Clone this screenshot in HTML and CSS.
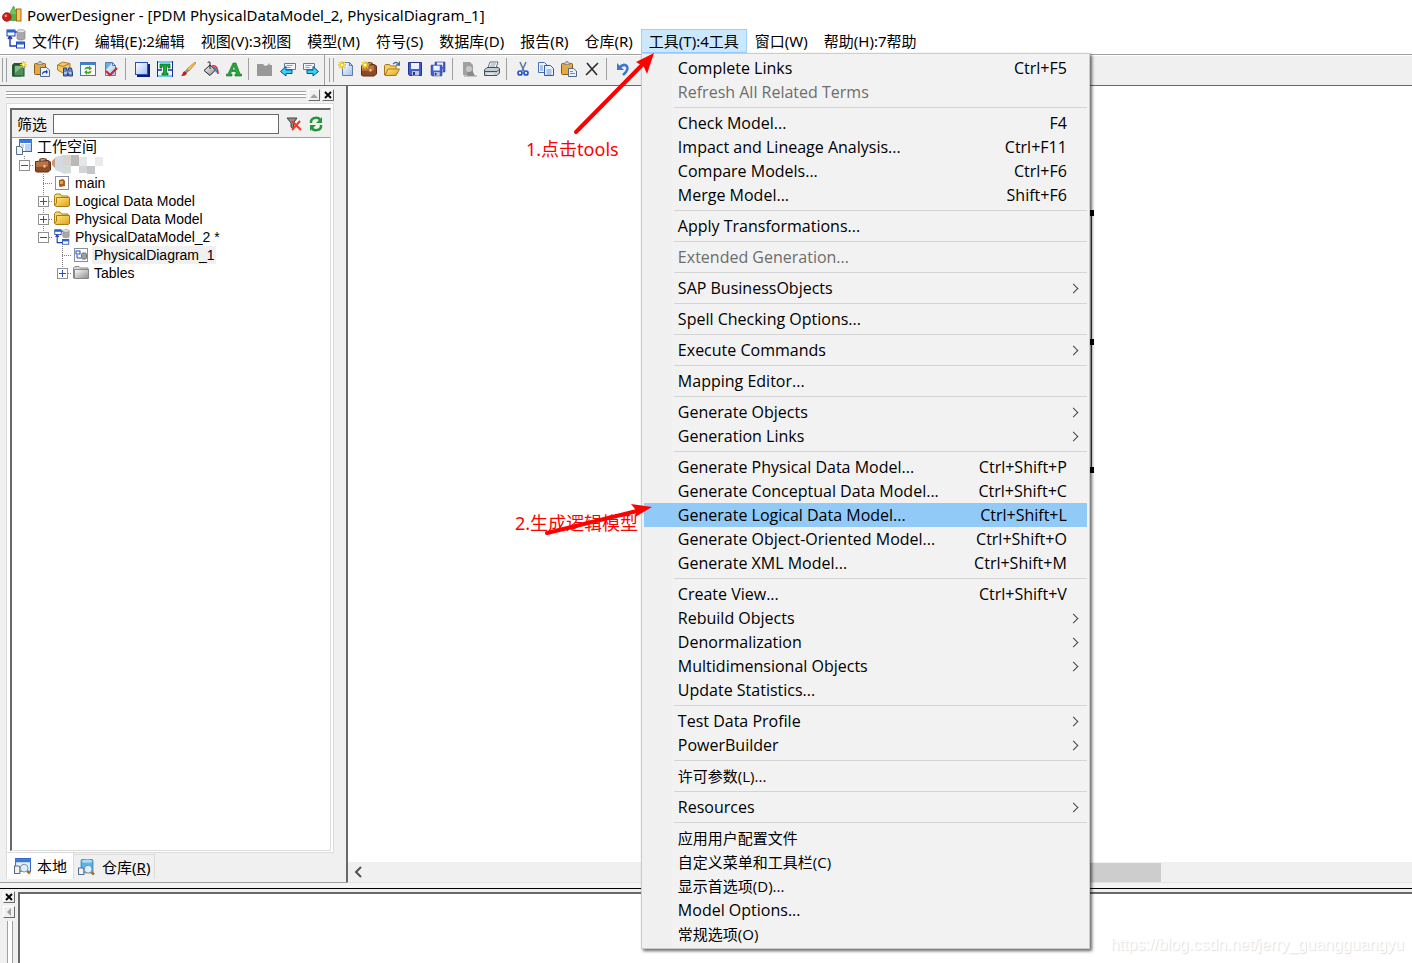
FILE: index.html
```html
<!DOCTYPE html>
<html lang="zh-CN">
<head>
<meta charset="utf-8">
<title>PowerDesigner</title>
<link rel="stylesheet" href="styles.css">
</head>
<body>
<svg class="defs" aria-hidden="true">
  <defs>
    <linearGradient id="gold" x1="0" y1="0" x2="1" y2="1"><stop offset="0" stop-color="#ffe98a"/><stop offset="1" stop-color="#e0a01c"/></linearGradient>
    <linearGradient id="silver" x1="0" y1="0" x2="1" y2="1"><stop offset="0" stop-color="#ffffff"/><stop offset="1" stop-color="#8a8a8a"/></linearGradient>
    <linearGradient id="sky" x1="0" y1="0" x2="1" y2="1"><stop offset="0" stop-color="#ffffff"/><stop offset="1" stop-color="#9fc0f0"/></linearGradient>
  </defs>
  <symbol id="spark" viewBox="0 0 8 8"><path d="M4 0v8M0 4h8M1 1l6 6M7 1l-6 6" stroke="#f0c818" stroke-width="1.3"/><circle cx="4" cy="4" r="1.3" fill="#fffbd0"/></symbol>
  <symbol id="model" viewBox="0 0 20 20"><path d="M4 7v10h7M4 7l-2 3M4 7l2 3M9 3h2" fill="none" stroke="#1c3cb4" stroke-width="1.4"/><rect x="1" y="1" width="8" height="6" fill="#fff" stroke="#1c3cb4"/><rect x="1" y="1" width="8" height="2.5" fill="#2a62d8"/><rect x="10.500" y="13" width="8" height="6" fill="#fff" stroke="#1c3cb4"/><rect x="10.500" y="13" width="8" height="2.500" fill="#2a62d8"/><path d="M11 2v7.500c0 2 8 2 8 0V2z" fill="#a8a8a8" stroke="#858585" stroke-width=".7"/><ellipse cx="15" cy="2.200" rx="4" ry="1.600" fill="#e4e4e4" stroke="#858585" stroke-width=".6"/></symbol>
  <symbol id="case" viewBox="0 0 16 16"><path d="M5 4V2.500c0-1 6-1 6 0V4" fill="none" stroke="#6e3218" stroke-width="1.500"/><path d="M0.500 4.500L13 3.500l2.500 1.500v8L13 15H1.500l-1-1z" fill="#8c4a26" stroke="#5f2c14"/><path d="M1 5l12-.8V9.500L1 10z" fill="#b97345"/><rect x="8.500" y="8" width="2" height="2.500" fill="#f6d87c"/></symbol>
  <symbol id="folder" viewBox="0 0 16 16"><path d="M.5 12.500V2.500L2 1h4l1.500 2H14v2" fill="#f7dc70" stroke="#a87c10"/><path d="M2.500 4.500h13v8l-1.500 1H2L.5 12.200 2.500 10z" fill="url(#gold)" stroke="#a87c10"/></symbol>
  <symbol id="gfolder" viewBox="0 0 16 16"><path d="M.5 13V3L2 1.500h4L7.500 3H15V13z" fill="#d8d8d8" stroke="#888"/><path d="M1.500 4.500h14v9h-14z" fill="url(#silver)" stroke="#888"/></symbol>
  <symbol id="lens" viewBox="0 0 12 12"><path d="M7.500 7.500l3.500 3" stroke="#b8681c" stroke-width="2.500"/><circle cx="5" cy="5" r="4" fill="#dcf0fc" stroke="#7c8ca0"/></symbol>
  <symbol id="page" viewBox="0 0 16 16"><path d="M3.500 1.500h7l3 3v10h-10z" fill="url(#sky)" stroke="#5a7ea8"/><path d="M10.500 1.500v3h3" fill="none" stroke="#5a7ea8"/></symbol>
  <symbol id="clip" viewBox="0 0 16 16"><rect x=".5" y="2.500" width="11" height="11" rx="1" fill="#e8aa38" stroke="#8a5a18"/><path d="M3 3.500V2h2V.500h2V2h2v1.500z" fill="#d4d4d4" stroke="#777" stroke-width=".7"/></symbol>
  <symbol id="floppy" viewBox="0 0 16 16"><path d="M1.500 1.500h13v13h-12l-1-1z" fill="#3e5ed0" stroke="#26348c"/><path d="M4 2h8v6H4z" fill="#eef2ff"/><path d="M5 10h7v4.500H5z" fill="#c0c8e0"/><path d="M6 11h2v3H6z" fill="#26348c"/></symbol>
  <symbol id="out" viewBox="0 0 16 16"><path d="M4.500 2.500h11v6h-11z" fill="#f2f5fa" stroke="#68789c"/><path d="M6.500 4.500h6M6.500 6.500h4" stroke="#8c9cbc"/></symbol>
</svg>

<header class="titlebar">
  <svg class="i20" viewBox="0 0 20 20"><path d="M6.500 11L11.500 1 16 11z" fill="#6cc85c" stroke="#3c9438" stroke-width=".8"/><path d="M8 9h6v7H8z" fill="#58b04c"/><circle cx="4.800" cy="12" r="4.300" fill="#cc1c1c" stroke="#941010" stroke-width=".8"/><circle cx="3.800" cy="10.800" r="1.400" fill="#f09080"/><rect x="14.500" y="4" width="4.500" height="12" fill="#f8c860" stroke="#a46a10"/></svg>
  <h1>PowerDesigner - [PDM PhysicalDataModel_2, PhysicalDiagram_1]</h1>
</header>

<nav class="menubar" aria-label="主菜单">
  <svg class="i20" viewBox="0 0 20 20"><use href="#model"/></svg>
  <button>文件(F)</button>
  <button>编辑(E):2编辑</button>
  <button>视图(V):3视图</button>
  <button>模型(M)</button>
  <button>符号(S)</button>
  <button>数据库(D)</button>
  <button>报告(R)</button>
  <button>仓库(R)</button>
  <div class="open">
    <button class="active" aria-expanded="true">工具(T):4工具</button>
    <div class="dropdown">
      <button>Complete Links<kbd>Ctrl+F5</kbd></button>
      <button disabled>Refresh All Related Terms</button>
      <hr>
      <button>Check Model...<kbd>F4</kbd></button>
      <button>Impact and Lineage Analysis...<kbd>Ctrl+F11</kbd></button>
      <button>Compare Models...<kbd>Ctrl+F6</kbd></button>
      <button>Merge Model...<kbd>Shift+F6</kbd></button>
      <hr>
      <button>Apply Transformations...</button>
      <hr>
      <button disabled>Extended Generation...</button>
      <hr>
      <button class="sub">SAP BusinessObjects</button>
      <hr>
      <button>Spell Checking Options...</button>
      <hr>
      <button class="sub">Execute Commands</button>
      <hr>
      <button>Mapping Editor...</button>
      <hr>
      <button class="sub">Generate Objects</button>
      <button class="sub">Generation Links</button>
      <hr>
      <button>Generate Physical Data Model...<kbd>Ctrl+Shift+P</kbd></button>
      <button>Generate Conceptual Data Model...<kbd>Ctrl+Shift+C</kbd></button>
      <button class="hot">Generate Logical Data Model...<kbd>Ctrl+Shift+L</kbd></button>
      <button>Generate Object-Oriented Model...<kbd>Ctrl+Shift+O</kbd></button>
      <button>Generate XML Model...<kbd>Ctrl+Shift+M</kbd></button>
      <hr>
      <button>Create View...<kbd>Ctrl+Shift+V</kbd></button>
      <button class="sub">Rebuild Objects</button>
      <button class="sub">Denormalization</button>
      <button class="sub">Multidimensional Objects</button>
      <button>Update Statistics...</button>
      <hr>
      <button class="sub">Test Data Profile</button>
      <button class="sub">PowerBuilder</button>
      <hr>
      <button class="zh">许可参数(L)...</button>
      <hr>
      <button class="sub">Resources</button>
      <hr>
      <button class="zh">应用用户配置文件</button>
      <button class="zh">自定义菜单和工具栏(C)</button>
      <button class="zh">显示首选项(D)...</button>
      <button>Model Options...</button>
      <button class="zh">常规选项(O)</button>
    </div>
  </div>
  <button>窗口(W)</button>
  <button>帮助(H):7帮助</button>
</nav>

<div class="toolbar">
  <div class="band">
    <button aria-label="新建模型"><svg viewBox="0 0 16 16"><path d="M1 4l2-2h9v12l-2 1.500H1z" fill="#245c34"/><rect x="3" y="4" width="10" height="11" fill="#4c9258" stroke="#1c4c2a"/><path d="M4 5h8L4 12z" fill="#86bc8c"/><use href="#spark" x="9" y="0" width="7" height="7"/></svg></button>
    <button aria-label="粘贴快捷方式"><svg viewBox="0 0 16 16"><use href="#clip" width="16" height="16"/><path d="M6.500 6.500h6l3 2.500v6.500h-9z" fill="#e8f0fc" stroke="#51688c"/><path d="M8 14c0-3 1-4 4-4V8.500l2 2.500-2 2v-1.500c-2 0-3 .5-4 2.500z" fill="#1c3ca4"/></svg></button>
    <button aria-label="查找"><svg viewBox="0 0 16 16"><path d="M.5 4l5-3L13 2.500V9l-7 3-5.500-3z" fill="#f2c868" stroke="#b07c20"/><path d="M.5 4L6 5.500l7-3" fill="none" stroke="#b07c20"/><path d="M6.500 7h3v2h2V7h3l1 5v3h-4v-3h-1v3h-4v-3z" fill="#6488c4" stroke="#284880"/><path d="M7 12h3M11.500 12h3" stroke="#fff"/></svg></button>
    <button aria-label="刷新"><svg viewBox="0 0 16 16"><rect x=".5" y="1.500" width="15" height="13" fill="#fff" stroke="#4876bc"/><path d="M1 2h14v2H1z" fill="#3e80d8"/><path d="M4.500 9c0-3 2-3.500 4.500-3V4.500L12 7.500l-3 2V8C7 7.500 6 8 4.500 9zM11.500 9.500c0 3-2 3.500-4.500 3V14l-3-3 3-2v1.500c2 .5 3 0 4.500-1z" fill="#4ca42c"/></svg></button>
    <button aria-label="检查模型"><svg viewBox="0 0 16 16"><use href="#page" x="-1" width="16" height="16"/><path d="M3 2h6L3 9z" fill="#64b0ec"/><path d="M3 10l4 4 7-7" fill="none" stroke="#cc2828" stroke-width="2.200"/></svg></button>
    <span class="sep"></span>
    <button aria-label="阴影"><svg viewBox="0 0 16 16"><path d="M3 3h13v13H3z" fill="#0c1c78"/><rect x="1.500" y="1.500" width="12" height="12" fill="url(#sky)" stroke="#2850c0"/></svg></button>
    <button aria-label="文本"><svg viewBox="0 0 16 16"><rect x=".5" y=".5" width="15" height="15" fill="#e8faff" stroke="#1c3090"/><path d="M1 1h14M1 15h14" stroke="#70c8f0" stroke-width="2"/><path d="M3 3h10v4h-2V5H9.500v7H11v2H5v-2h1.500V5H5v2H3z" fill="#10b030" stroke="#086818" stroke-width=".7"/><path d="M1 9h4M11 9h4" stroke="#1c3090" stroke-width="1.500"/></svg></button>
    <button aria-label="画笔"><svg viewBox="0 0 16 16"><path d="M15 1L7 8l2 2 7-8z" fill="#f8c050" stroke="#b07820" stroke-width=".7"/><path d="M1 15c2-1 1-4 4-5l2 2c-1 3-4 3-6 3z" fill="#cc1818"/><path d="M5 10l2-2 2 2-2 2z" fill="#888"/></svg></button>
    <button aria-label="填充"><svg viewBox="0 0 16 16"><path d="M7 4L1 9.500l6 5 5.500-5.500z" fill="url(#silver)" stroke="#222"/><path d="M7 8V2c0-2-2-1.500-2 0" fill="none" stroke="#222"/><path d="M9 5c4-1 6 2 6 8" fill="none" stroke="#e82020" stroke-width="1.500"/><path d="M10 6.500c3 0 3 2 3.500 5" fill="none" stroke="#3080e0" stroke-width="1.500"/></svg></button>
    <button aria-label="字体"><svg viewBox="0 0 16 16"><path d="M7 2h3l4 11h1.500v2H9v-2h1.500l-1-2.500h-4L4.500 13H6v2H.500v-2H2zM8 4.500L6.300 9h3z" fill="#28a83c" stroke="#0c6c20" stroke-width=".6"/></svg></button>
    <span class="sep"></span>
    <button aria-label="上级" disabled><svg viewBox="0 0 16 16"><path d="M0 3h6l2 2 3-1 1-2 1 2h2v11H0z" fill="#989898"/></svg></button>
    <button aria-label="后退"><svg viewBox="0 0 16 16"><use href="#out" width="16" height="16"/><path d="M.5 10.500L6 5.500V9h6v3.500H6V15z" fill="#34d4f4" stroke="#084c98"/></svg></button>
    <button aria-label="前进"><svg viewBox="0 0 16 16"><use href="#out" x="-4" width="16" height="16"/><path d="M15.500 10.500L10 5.500V9H4v3.500h6V15z" fill="#34d4f4" stroke="#084c98"/></svg></button>
  </div>
  <div class="band grip">
    <button aria-label="新建"><svg viewBox="0 0 16 16"><use href="#page" x="1" width="16" height="16"/><use href="#spark" width="8" height="8"/></svg></button>
    <button aria-label="新建项目"><svg viewBox="0 0 16 16"><use href="#case" width="16" height="16"/><use href="#spark" width="8" height="8"/></svg></button>
    <button aria-label="打开"><svg viewBox="0 0 16 16"><path d="M.5 14V4.500l1-1h4l1 1.500H12v3" fill="#f6d060" stroke="#a47818"/><path d="M1 14.500L4 8h11.500l-3.500 6.500z" fill="url(#gold)" stroke="#a47818"/><path d="M9 3c2-2 4-2 6 0M15.500.500V4H12" fill="none" stroke="#486c98" stroke-width="1.300"/></svg></button>
    <button aria-label="保存"><svg viewBox="0 0 16 16"><use href="#floppy" width="16" height="16"/></svg></button>
    <button aria-label="全部保存"><svg viewBox="0 0 16 16"><use href="#floppy" x="4" width="12" height="12"/><use href="#floppy" y="3" width="13" height="13"/></svg></button>
    <span class="sep"></span>
    <button aria-label="预览" disabled><svg viewBox="0 0 16 16"><path d="M2 1h7l3 3v10H2z" fill="#a0a0a0"/><path d="M9 5l5 10H6z" fill="#888"/><circle cx="8" cy="8" r="3" fill="#c8c8c8"/><path d="M3 15h13" stroke="#999"/></svg></button>
    <button aria-label="打印"><svg viewBox="0 0 16 16"><path d="M4 7l2-6h8l-2 6z" fill="#fff" stroke="#607080"/><path d="M7 3h5M6 5h5" stroke="#8898a8"/><path d="M.5 9L3 6.500h11l1.500 1V12L13 14.500H.500z" fill="#c4ccd4" stroke="#405060"/><path d="M1 10.500h12l2-2" fill="none" stroke="#405060"/><path d="M3 13h7" stroke="#f8fcff"/></svg></button>
    <span class="sep"></span>
    <button aria-label="剪切"><svg viewBox="0 0 16 16"><path d="M5 1l4 9M11 1L7 10" stroke="#5878a0" stroke-width="1.500"/><circle cx="5" cy="12" r="2" fill="none" stroke="#2456c4" stroke-width="1.700"/><circle cx="11" cy="12" r="2" fill="none" stroke="#2456c4" stroke-width="1.700"/></svg></button>
    <button aria-label="复制"><svg viewBox="0 0 16 16"><path d="M.5 1.500h6l3 3v7h-9z" fill="#eaf2ff" stroke="#4870b8"/><path d="M6.500 4.500h6l3 3v7h-9z" fill="#eaf2ff" stroke="#3058a4"/><path d="M2 5h3M2 7h3M2 9h3M8.500 9h5M8.500 11h5M8.500 13h5" stroke="#6c94d4"/></svg></button>
    <button aria-label="粘贴"><svg viewBox="0 0 16 16"><use href="#clip" width="16" height="16"/><path d="M7.500 7.500h5l3 2.500v5.500h-8z" fill="#e8f0fc" stroke="#51688c"/><path d="M9 10.500h3M9 12.500h5" stroke="#6c94c4"/></svg></button>
    <button aria-label="删除"><svg viewBox="0 0 16 16"><path d="M3 2l10 12M14 2L2 14" stroke="#2c2c2c" stroke-width="1.600"/></svg></button>
    <span class="sep"></span>
    <button aria-label="撤销"><svg viewBox="0 0 16 16"><path d="M4 7c5-6 10-2 8 2-1 3-3 4-4 5" fill="none" stroke="#3c78cc" stroke-width="2.500"/><path d="M2 2v7h7z" fill="#3c78cc"/></svg></button>
  </div>
</div>

<main class="work">
  <aside class="browser">
    <div class="caption"><span class="rails"></span><button class="mini" aria-label="收起"><svg viewBox="0 0 10 10"><path d="M1 8l4-4 4 4z" fill="#a0a0a0"/></svg></button><button class="mini" aria-label="关闭"><svg viewBox="0 0 10 10"><path d="M2 2l6 6M8 2L2 8" stroke="#000" stroke-width="1.800"/></svg></button></div>
    <section class="frame">
      <div class="inner">
        <div class="filter">
          <label for="filter">筛选</label>
          <input id="filter" type="text">
          <button aria-label="清除筛选"><svg viewBox="0 0 16 16"><path d="M1 2h10L7.500 7v6L5 11V7z" fill="#909090" stroke="#444"/><path d="M6 5l9 9M14 5l-8 9" stroke="#e83c28" stroke-width="2"/></svg></button>
          <button aria-label="刷新树"><svg viewBox="0 0 16 16"><path d="M3 7V5c1-4 8-4 9-1M13 9v2c-1 4-8 4-9 1" fill="none" stroke="#24963c" stroke-width="2.500"/><path d="M14 1v6H8zM2 15V9h6z" fill="#24963c"/></svg></button>
        </div>
        <div class="tree">
          <div class="row root"><svg viewBox="0 0 16 16"><rect x="3.500" y=".5" width="12" height="12" fill="#fff" stroke="#3468c8"/><path d="M3 1h13v3H3z" fill="#3c78e0"/><path d="M5 6h3M5 8h3" stroke="#88b0f0"/><path d="M9 5h6v7H9z" fill="#b8d4fc"/><path d="M.5 7.500h4l2 2v6h-6z" fill="#f0f4fa" stroke="#587088"/></svg><span class="cjk">工作空间</span></div>
          <div class="row"><i class="cell up"></i><i class="box minus"></i><svg viewBox="0 0 16 16"><use href="#case"/></svg><svg class="mosaic" viewBox="0 0 52 20"><path d="M0 6l3-3v10L0 10z" fill="#c89878"/><path d="M3 2l8-2v18l-8-3z" fill="#d4dae2"/><path d="M11 0h8v10h-8z" fill="#d6d4d0"/><path d="M19 0h8v11h-8z" fill="#b9bab4"/><path d="M11 10h8v8l-8 1z" fill="#d2dcd8"/><path d="M27 2h8v9h-8z" fill="#e6e6e6"/><path d="M27 11h8v7h-8z" fill="#d4d4d6"/><path d="M35 11h8v8h-8z" fill="#c2c6ca"/><path d="M43 2h8v9h-8z" fill="#ebebeb"/></svg></div>
          <div class="row"><i class="cell blank"></i><i class="cell tee"></i><svg viewBox="0 0 16 16"><rect x="1.500" y="1.500" width="13" height="13" fill="#fff" stroke="#8890a0"/><path d="M5 5l4-1 2 2v5l-5 1-1-1z" fill="#a85c20"/><path d="M6 6h3v3H6z" fill="#f0a030"/></svg><span>main</span></div>
          <div class="row"><i class="cell blank"></i><i class="cell tee"></i><i class="box plus"></i><svg viewBox="0 0 16 16"><use href="#folder"/></svg><span>Logical Data Model</span></div>
          <div class="row"><i class="cell blank"></i><i class="cell tee"></i><i class="box plus"></i><svg viewBox="0 0 16 16"><use href="#folder"/></svg><span>Physical Data Model</span></div>
          <div class="row"><i class="cell blank"></i><i class="cell up"></i><i class="box minus"></i><svg viewBox="0 0 20 20"><use href="#model"/></svg><span>PhysicalDataModel_2 *</span></div>
          <div class="row"><i class="cell blank"></i><i class="cell blank"></i><i class="cell tee"></i><svg viewBox="0 0 16 16"><rect x="1.500" y="1.500" width="13" height="13" fill="#fff" stroke="#8890a0"/><rect x="3" y="4" width="4" height="3" fill="#fff" stroke="#1c4cc4"/><path d="M4 8v3h4" fill="none" stroke="#1c4cc4"/><rect x="8.500" y="6" width="5" height="6" rx="1.500" fill="#a0a0a0" stroke="#707070"/></svg><span class="selected">PhysicalDiagram_1</span></div>
          <div class="row"><i class="cell blank"></i><i class="cell blank"></i><i class="cell up"></i><i class="box plus"></i><svg viewBox="0 0 16 16"><use href="#gfolder"/></svg><span>Tables</span></div>
        </div>
      </div>
    </section>
    <div class="tabs">
      <button class="tab current"><svg viewBox="0 0 16 16"><rect x="1.500" y=".5" width="14" height="12" fill="#eaf2ff" stroke="#3468c8"/><path d="M1 1h15v3H1z" fill="#3c78e0"/><path d="M.5 7.500h4l1 1v6h-5z" fill="#f0f4fa" stroke="#587088"/><use href="#lens" x="5" y="5" width="11" height="11"/></svg>本地</button>
      <button class="tab"><svg viewBox="0 0 16 16"><path d="M3 1.500c0-2 11-2 11 0V13H3z" fill="#58b4ec" stroke="#3c84bc"/><ellipse cx="8.500" cy="2" rx="5" ry="1.500" fill="#a8dcf8"/><path d="M.5 8.500h4l1 1v5h-5z" fill="#f0f4fa" stroke="#587088"/><use href="#lens" x="5" y="5" width="11" height="11"/></svg><span>仓库(<u>R</u>)</span></button>
    </div>
  </aside>
  <section class="canvas">
    <div class="sheet"><div class="entity"><i></i><i></i><i></i></div></div>
    <div class="scroll"><button aria-label="向左滚动"><svg viewBox="0 0 10 12"><path d="M8 1L3 6l5 5" fill="none" stroke="#505050" stroke-width="2"/></svg></button><span class="thumb"></span></div>
  </section>
</main>

<footer class="output">
  <div class="side"><button class="mini" aria-label="关闭输出"><svg viewBox="0 0 10 10"><path d="M2 2l6 6M8 2L2 8" stroke="#000" stroke-width="1.800"/></svg></button><button class="mini" aria-label="收起输出"><svg viewBox="0 0 10 10"><path d="M7 1v8L3 5z" fill="#a0a0a0"/></svg></button><span class="vrails"></span></div>
  <div class="log"></div>
</footer>

<p class="note first">1.点击tools</p>
<p class="note second">2.生成逻辑模型</p>
<svg class="arrows" viewBox="0 0 160 500" aria-hidden="true"><g fill="none" stroke="#f00" stroke-width="4" stroke-linecap="round"><path d="M35 82L102 14"/><path d="M6 483L96 461"/></g><g fill="#f00"><path d="M113 3L95 12l5 3 3 2 3 7z"/><path d="M111 457L90 454l4 5 1 4-1 4z"/></g></svg>
<p class="watermark">https://blog.csdn.net/jerry_guangguangyu</p>
</body>
</html>
```

FILE: styles.css
```css
* { box-sizing: border-box; }
body {
  margin: 0;
  height: 100vh;
  display: flex;
  flex-direction: column;
  position: relative;
  overflow: hidden;
  background: #fff;
  color: #000;
  font: 15px/24px "Noto Sans", "Noto Sans CJK SC", sans-serif;
}
button { margin: 0; padding: 0; border: 0; background: none; color: inherit; font: inherit; }
svg { display: block; flex: none; }
.defs { position: absolute; width: 0; height: 0; }
.i20 { width: 20px; height: 20px; }

.titlebar { display: flex; align-items: center; gap: 5px; height: 29px; padding-left: 2px; }
.titlebar h1 { margin: 0; font-size: 15px; font-weight: 400; white-space: nowrap; }

.menubar { display: flex; height: 25px; padding-left: 6px; position: relative; z-index: 2; }
.menubar .i20 { margin-right: -2px; }
.menubar > button, .menubar .active { padding: 0 8px; height: 24px; line-height: 24px; white-space: nowrap; }
.menubar .open { position: relative; }
.menubar .active { background: #cce8ff; box-shadow: inset 0 0 0 1px #99d1ff; }
.dropdown {
  position: absolute;
  top: 24px;
  left: 0;
  width: 449px;
  padding: 2px;
  border: 1px solid #ccc;
  background: linear-gradient(90deg, #f0f0f0 30px, #f2f2f2 30px);
  box-shadow: 2px 2px 3px rgba(0, 0, 0, .6);
  font: 16px/24px "Open Sans", "Noto Sans CJK SC", sans-serif;
}
.dropdown button { display: flex; align-items: center; width: 100%; height: 24px; padding: 0 20px 0 34px; white-space: nowrap; text-align: left; }
.dropdown button:disabled { color: #6d6d6d; }
.dropdown kbd { margin-left: auto; font: inherit; }
.dropdown .zh { font-size: 15px; }
.dropdown .hot { background: #91c9f7; }
.dropdown .sub { padding-right: 10px; }
.dropdown .sub::after { content: ""; width: 6px; height: 6px; margin-left: auto; border: solid #444; border-width: 1px 1px 0 0; transform: rotate(45deg); }
.dropdown hr { height: 1px; margin: 3px 0 3px 30px; border: 0; background: #d4d4d4; }

.toolbar { display: flex; height: 32px; border-top: 1px solid #a0a0a0; border-bottom: 1px solid #696969; background: #f0f0f0; box-shadow: inset 0 1px #fff; }
.band { display: flex; align-items: center; padding: 0 2px 2px 7px; border-right: 1px solid #a0a0a0; background: linear-gradient(#a0a0a0, #a0a0a0) 2px 3px / 1px 24px no-repeat, linear-gradient(#a0a0a0, #a0a0a0) 6px 3px / 1px 24px no-repeat; }
.band.grip { margin-left: 2px; border-right: 0; }
.band button { display: grid; place-items: center; width: 23px; height: 23px; }
.band svg { width: 16px; height: 16px; }
.sep { width: 8px; height: 22px; background: linear-gradient(#a0a0a0, #a0a0a0) 3px 0 / 1px 100% no-repeat; }

.work { display: flex; flex: 1; min-height: 0; }
.browser { display: flex; flex-direction: column; flex: none; width: 346px; padding: 2px 12px 2px 6px; background: #f0f0f0; border-bottom: 1px solid #a0a0a0; }
.caption { display: flex; align-items: center; gap: 2px; height: 13px; }
.rails { flex: 1; height: 7px; border: solid #a0a0a0; border-width: 1px 0; background: linear-gradient(#a0a0a0, #a0a0a0) 0 2px / 100% 1px no-repeat, #fff; }
.mini { width: 12px; height: 12px; background: #f0f0f0; border: solid; border-width: 1px; border-color: #fff #696969 #696969 #fff; }
.mini svg { width: 10px; height: 10px; }
.frame { display: flex; flex: 1; min-height: 0; margin-top: 2px; padding: 4px 2px 1px 3px; border: 1px solid #dcdcdc; background: #fff; }
.inner { flex: 1; border: solid; border-width: 2px 1px 1px 2px; border-color: #696969 #dcdcdc #dcdcdc #696969; }
.filter { display: flex; align-items: center; height: 28px; padding: 0 6px 0 5px; background: #f0f0f0; border-bottom: 1px solid #a0a0a0; }
.filter input { flex: 1; min-width: 0; height: 20px; margin: 0 7px 0 6px; padding: 0 3px; border: 1px solid #696969; background: #fff; font: 14px "Liberation Sans", sans-serif; }
.filter svg { width: 16px; height: 16px; }
.filter button + button { margin-left: 6px; }
.tree { padding-left: 3px; font: 14px/18px "Liberation Sans", "Noto Sans CJK SC", sans-serif; }
.row { display: flex; align-items: center; height: 18px; position: relative; white-space: nowrap; }
.row svg { width: 16px; height: 16px; margin-left: 1px; }
.row .mosaic { width: 52px; height: 20px; margin-left: 1px; }
.row span { margin-left: 3px; padding: 0 2px; }
.row .cjk { font-size: 15px; }
.row .selected { padding-right: 1px; background: #f0f0f0; }
.cell { width: 19px; height: 18px; flex: none; }
.tee, .up { background: repeating-linear-gradient(90deg, #808080 0 1px, transparent 1px 2px) 9px 9px / 10px 1px no-repeat, repeating-linear-gradient(#808080 0 1px, transparent 1px 2px) 9px 0 / 1px 100% no-repeat; }
.up { background-size: 10px 1px, 1px 10px; }
.box { width: 11px; height: 11px; margin: 0 4px 0 -15px; border: 1px solid #919191; background: linear-gradient(#2c50b0, #2c50b0) 50% 50% / 7px 1px no-repeat, #fff; }
.plus { background: linear-gradient(#2c50b0, #2c50b0) 50% 50% / 7px 1px no-repeat, linear-gradient(#2c50b0, #2c50b0) 50% 50% / 1px 7px no-repeat, #fff; }
.tabs { display: flex; align-items: flex-start; height: 27px; }
.tab { display: flex; align-items: center; gap: 7px; height: 25px; margin-top: 1px; padding: 0 4px; border: 1px solid #dcdcdc; border-width: 1px 1px 0 0; white-space: nowrap; }
.tab svg { width: 17px; height: 17px; }
.tab.current { gap: 6px; height: 26px; margin-top: 0; padding: 0 6px 0 7px; background: #fff; border-width: 0 1px; }
.canvas { display: flex; flex-direction: column; flex: 1; min-width: 0; border-left: 2px solid #696969; border-bottom: 1px solid #e3e3e3; }
.sheet { flex: 1; position: relative; }
.entity { position: absolute; left: 352px; top: 126px; width: 392px; height: 259px; border: 1px solid #00507c; }
.entity i { position: absolute; right: -3px; width: 5px; height: 6px; background: #000; }
.entity i:nth-child(1) { top: -3px; }
.entity i:nth-child(2) { top: 126px; }
.entity i:nth-child(3) { bottom: -3px; }
.scroll { display: flex; align-items: center; height: 20px; background: #f0f0f0; }
.scroll button { width: 20px; padding-left: 5px; }
.scroll svg { width: 10px; height: 12px; }
.thumb { width: 400px; height: 19px; margin-left: 393px; background: #cdcdcd; }

.output { display: flex; height: 80px; border-top: 5px solid #f4f4f4; background: #f0f0f0; box-shadow: inset 0 1px #000; }
.side { display: flex; flex-direction: column; gap: 3px; width: 18px; padding: 3px 3px 0; }
.vrails { flex: 1; width: 6px; margin-left: 4px; border: solid #a0a0a0; border-width: 0 1px; background: #fff; }
.log { flex: 1; margin-top: 4px; border: solid #696969; border-width: 2px 0 0 2px; background: #fff; }

.note { position: absolute; z-index: 3; margin: 0; color: #f00; font-size: 18px; line-height: 24px; white-space: nowrap; }
.first { left: 526px; top: 137px; }
.second { left: 515px; top: 511px; }
.arrows { position: absolute; left: 541px; top: 50px; width: 160px; height: 500px; z-index: 4; pointer-events: none; }
.watermark { position: absolute; right: 8px; bottom: 9px; margin: 0; color: #fff; text-shadow: 1px 1px 1px #ddd; font: 16px/18px "Liberation Sans", sans-serif; }
```
